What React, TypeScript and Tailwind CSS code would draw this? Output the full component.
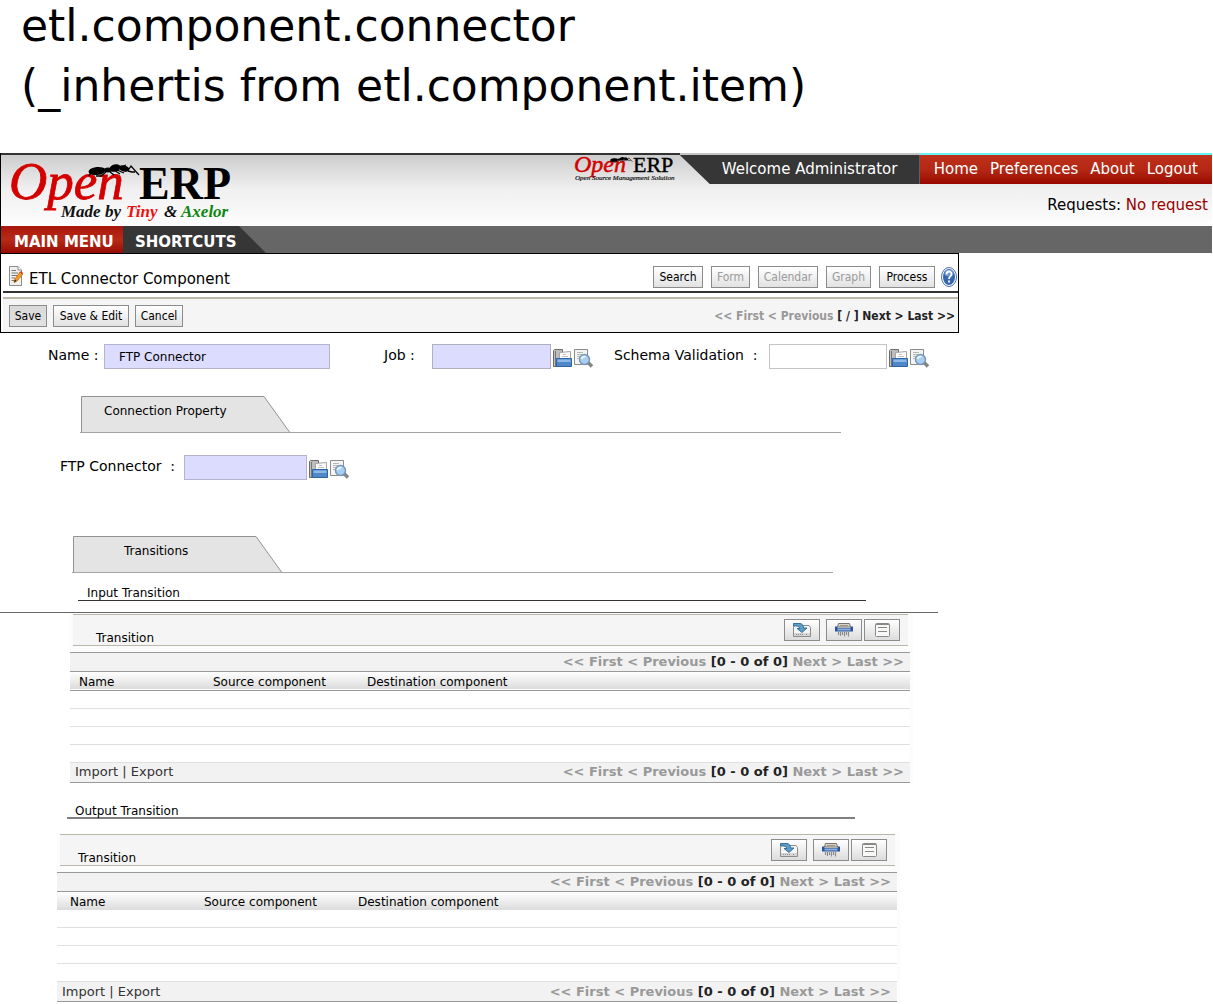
import { useId, type ReactNode } from "react";

function Ant() {
  return (
    <g>
      <ellipse cx="9" cy="7" rx="8.500" ry="4" transform="rotate(-6 9 7)" />
      <ellipse cx="20" cy="6" rx="4" ry="2.500" />
      <ellipse cx="27" cy="4" rx="5.500" ry="3.500" transform="rotate(-15 27 4)" />
      <ellipse cx="36" cy="4.500" rx="5.500" ry="3" transform="rotate(12 36 4.500)" />
      <path
        d="M3 8L1 12M12 9L6 11M18 8L13 12H8M22 8L26 11M26 6L32 10M29 6L36 9M33 3L38 1M41 5L43 2L51 11M40 7L44 8L47 8"
        fill="none"
        stroke="#000"
        strokeWidth="1.300"
      />
    </g>
  );
}

function MainLogo() {
  return (
    <svg className="block h-[66px] w-[236px] shrink-0" viewBox="0 0 236 66" role="img" aria-label="Open ERP, made by Tiny and Axelor">
      <g fontFamily="'Liberation Serif', serif">
        <text x="8" y="40" fontSize="53" fontStyle="italic" fill="#d40000" stroke="#d40000" strokeWidth="0.8">Open</text>
        <text x="138" y="40" fontSize="46" fontWeight="bold" fill="#000">ERP</text>
        <g fontSize="17" fontStyle="italic" fontWeight="bold">
          <text x="60" y="58" fill="#111">Made by</text>
          <text x="125" y="58" fill="#f01010">Tiny</text>
          <text x="163" y="58" fill="#111">&amp;</text>
          <text x="180" y="58" fill="#0d860d">Axelor</text>
        </g>
      </g>
      <g transform="translate(87 5)"><Ant /></g>
    </svg>
  );
}

function SmallLogo() {
  return (
    <svg className="block h-[29px] w-[106px] shrink-0" viewBox="0 0 106 29" role="img" aria-label="Open ERP, Open Source Management Solution">
      <g fontFamily="'Liberation Serif', serif">
        <text x="0" y="17" fontSize="24" fontStyle="italic" fill="#d40000" stroke="#d40000" strokeWidth="0.5">Open</text>
        <text x="59" y="17" fontSize="22" fill="#000" stroke="#000" strokeWidth="0.4">ERP</text>
        <text x="1" y="25" fontSize="7" fontStyle="italic" fill="#111" stroke="#111" strokeWidth="0.2">Open Source Management Solution</text>
      </g>
      <g transform="translate(36 2) scale(.44)"><Ant /></g>
    </svg>
  );
}

function EditIcon() {
  return (
    <svg className="block h-[20px] w-[14px] shrink-0" viewBox="0 0 14 20" aria-hidden="true">
      <path d="M.5 .5H9L12.500 4V19.500H.5Z" fill="#f0f0f0" stroke="#8c8c8c" />
      <path d="M9 .5V4H12.500" fill="#fff" stroke="#8c8c8c" />
      <path d="M2.500 4.500H7M2.500 7H9M2.500 9.500H8M2.500 12H6M2.500 14.500H5" stroke="#777" />
      <path d="M6 13L11 6L13.500 8.500L8 15L5 16.500Z" fill="#f59a1c" stroke="#b85c00" strokeWidth=".7" />
      <path d="M5 16.500L6 13.500L7.500 15Z" fill="#332200" />
      <path d="M11 6L12 5L14 7L13.500 8.500Z" fill="#d43a1a" />
    </svg>
  );
}

function HelpIcon() {
  return (
    <svg className="block h-[20px] w-[16px]" viewBox="0 0 16 20" aria-hidden="true">
      <ellipse cx="8" cy="10" rx="7.500" ry="9.500" fill="#fff" stroke="#4a6fa8" />
      <ellipse cx="8" cy="10" rx="6" ry="8" fill="#3765ac" />
      <ellipse cx="8" cy="6" rx="4.500" ry="3.500" fill="#6f95cf" />
      <path d="M5.500 7.500C5.500 3.500 10.800 3.500 10.500 7.500C10.300 9.500 8 9.500 8 12M8 13.500V15.500" fill="none" stroke="#fff" strokeWidth="1.800" />
    </svg>
  );
}

function FolderIcon() {
  return (
    <svg className="block h-[19px] w-[19px]" viewBox="0 0 19 19" aria-hidden="true">
      <path d="M.5 17.500V1.500L1.500 .5H9.500V17.500Z" fill="#bdbdbd" stroke="#6c6c6c" />
      <path d="M2.500 2V17" stroke="#777" />
      <path d="M6.500 3.500L17.500 2.500V11H6.500Z" fill="#fafafa" stroke="#a5a5a5" />
      <path d="M10 5.500H13M9 7.500H15" stroke="#c4c4c4" />
      <path d="M3.500 9.500H18.500V17.500H3.500Z" fill="#4f87c7" stroke="#2c64a8" />
      <path d="M4.500 10.500H17.500V13H4.500Z" fill="#8fb8e4" />
    </svg>
  );
}

function LookupIcon() {
  return (
    <svg className="block h-[19px] w-[20px]" viewBox="0 0 20 19" aria-hidden="true">
      <path d="M.5 .5H13.500V15.500H.5Z" fill="#f4f4f4" stroke="#8b8b8b" />
      <path d="M3 3.500H9M3 5.500H8M3 7.500H6M3 9.500H5" stroke="#b5b5b5" />
      <path d="M14 13.500L18 17.500" stroke="#858585" strokeWidth="3.500" />
      <circle cx="10.500" cy="10.500" r="5" fill="#a9cdf0" stroke="#7494b8" strokeWidth="1.400" />
      <path d="M7.500 10C8 8 9.800 7.300 11.500 7.800" fill="none" stroke="#e6f3ff" strokeWidth="2" />
    </svg>
  );
}

function SaveDiskIcon() {
  return (
    <svg className="block h-[14px] w-[18px]" viewBox="0 0 18 14" aria-hidden="true">
      <path d="M.5 3.500L2 2.500H16L17.500 4.500V13.500H.5Z" fill="#f5f5f5" stroke="#8b8b8b" />
      <path d="M1 10H17V13H1Z" fill="#d5d5d5" />
      <path d="M3 11.500H11M13 11.500H15" stroke="#8e8e8e" strokeDasharray="1 1" />
      <path d="M.5 .5H7C9.500 .8 10.500 2.500 10.500 5H14L9 9.500L4 5.500H7C6.500 3.500 4 2.500 .5 3Z" fill="#5f9cc6" stroke="#2b6690" strokeWidth=".9" />
    </svg>
  );
}

function ShredIcon() {
  return (
    <svg className="block h-[14px] w-[18px]" viewBox="0 0 18 14" aria-hidden="true">
      <path d="M3.500 .5H14.500L15.500 4H2.500Z" fill="#d8d4cc" stroke="#77736a" />
      <path d="M5 2.500H13" stroke="#9d998f" />
      <path d="M0 3.500H2.500V5H15.500V3.500H18V8.500H0Z" fill="#28549b" />
      <path d="M2.500 5.500H15.500V7.500H2.500Z" fill="#8fb0de" />
      <path d="M3.500 9V12M5.500 9V13M7.500 9V12M9.500 9V13.500M11.500 9V12M13.500 9V13.500" stroke="#8b8b8b" strokeWidth="1.200" />
    </svg>
  );
}

function FormIcon() {
  return (
    <svg className="block h-[14px] w-[15px]" viewBox="0 0 15 14" aria-hidden="true">
      <rect x=".5" y=".5" width="14" height="13" rx="1" fill="#f8f8f8" stroke="#8a8a84" />
      <path d="M1 1.500H14" stroke="#8a8a84" />
      <path d="M3 4.500H12M3 8.500H12" stroke="#8a8a84" />
    </svg>
  );
}

function ToolButton({ children, disabled, className }: { children: ReactNode; disabled?: boolean; className: string }) {
  return (
    <button
      type="button"
      disabled={disabled}
      className={`h-[22px] shrink-0 whitespace-nowrap border border-[#8c8c8c] bg-linear-to-b font-['DejaVu_Sans_Condensed','DejaVu_Sans',sans-serif] text-[12px] leading-[20px] text-black disabled:text-[#9b9b9b] ${className}`}
    >
      {children}
    </button>
  );
}

function IconButton({ label, children }: { label: string; children: ReactNode }) {
  return (
    <button
      type="button"
      aria-label={label}
      className="flex h-[22px] w-[36px] items-center justify-center border border-[#8c8c8c] bg-linear-to-b from-white to-[#dcdcdc]"
    >
      {children}
    </button>
  );
}

function LookupButtons({ label }: { label: string }) {
  return (
    <span className="ml-[2px] flex gap-[2px] pt-[3px]">
      <button type="button" aria-label={`Open ${label}`}><FolderIcon /></button>
      <button type="button" aria-label={`Search ${label}`}><LookupIcon /></button>
    </span>
  );
}

function Field({ label, labelClass, inputClass, value, lookup }: { label: string; labelClass: string; inputClass: string; value?: string; lookup?: boolean }) {
  const id = useId();
  return (
    <div className="flex items-center">
      <label htmlFor={id} className={`shrink-0 whitespace-pre pb-[3px] text-[14px] leading-[20px] ${labelClass}`}>{label}</label>
      <input id={id} type="text" defaultValue={value} className={`h-[25px] min-w-0 border text-[12px] ${inputClass}`} />
      {lookup && <LookupButtons label={label.replace(/\s*:$/, "")} />}
    </div>
  );
}

function TabHeader({ title, titleClass }: { title: string; titleClass: string }) {
  return (
    <div className="w-full max-w-[761px] border-b border-[#a5a5a5]">
      <h2 className="relative h-[36px] w-[210px]">
        <svg className="absolute inset-0 h-full w-full" viewBox="0 0 210 36" aria-hidden="true">
          <path d="M1.500 36V.5H184L209.500 36" fill="#e4e4e4" stroke="#929292" />
        </svg>
        <span className={`relative block pt-[7px] text-[12px] leading-[16px] ${titleClass}`}>{title}</span>
      </h2>
    </div>
  );
}

function Pager() {
  return (
    <nav aria-label="Pages" className="whitespace-nowrap text-[13px] leading-[18px] font-bold text-[#999]">
      <a href="#first">&lt;&lt; First</a> <a href="#previous">&lt; Previous</a>{" "}
      <span className="text-[#222]">[0 - 0 of 0]</span>{" "}
      <a href="#next">Next &gt;</a> <a href="#last">Last &gt;&gt;</a>
    </nav>
  );
}

function TransitionList({ label, titleClass, firstCell, headLine }: { label: string; titleClass: string; firstCell: string; headLine: string }) {
  return (
    <section aria-label={label} className="w-full max-w-[843px] bg-[#fcfcfc] pt-px pr-[3px]">
      <div className="mr-[2px] ml-[3px] flex h-[32px] items-end justify-between border-y border-[#bab6a9] bg-[#f5f5f5] pr-[8px]">
        <h4 className={`text-[12px] leading-[14px] ${titleClass}`}>Transition</h4>
        <div className="flex self-start pt-[4px]">
          <IconButton label="Save transition"><SaveDiskIcon /></IconButton>
          <span className="ml-[6px] flex gap-[2px]">
            <IconButton label="Delete transition"><ShredIcon /></IconButton>
            <IconButton label="Open form"><FormIcon /></IconButton>
          </span>
        </div>
      </div>
      <div className="mt-[6px] flex h-[20px] items-center justify-end border-y border-[#999] bg-[#f2f2f2] pr-[6px]">
        <Pager />
      </div>
      <table className="w-full table-fixed border-collapse bg-white text-left text-[12px]">
        <thead>
          <tr className={`h-[18px] bg-linear-to-b from-white to-[#dcdcdc] align-bottom ${headLine}`}>
            <th className={`p-0 align-bottom leading-[15px] font-normal ${firstCell}`}>Name</th>
            <th className="w-[154px] p-0 align-bottom leading-[15px] font-normal">Source component</th>
            <th className="p-0 align-bottom leading-[15px] font-normal">Destination component</th>
          </tr>
        </thead>
        <tbody>
          {[1, 2, 3, 4].map((row) => (
            <tr key={row} className="h-[18px] border-b border-[#e0e0e0]">
              <td className="p-0" />
              <td className="p-0" />
              <td className="p-0" />
            </tr>
          ))}
        </tbody>
      </table>
      <div className="flex h-[20px] items-center justify-between border-b border-[#999] bg-[#f2f2f2] pr-[6px] pl-[5px] text-[13px] leading-[18px] text-[#333]">
        <span><a href="#import">Import</a> | <a href="#export">Export</a></span>
        <Pager />
      </div>
    </section>
  );
}

export default function App() {
  return (
    <div className="overflow-hidden bg-white font-['DejaVu_Sans',sans-serif] text-black">
      <h1 className="-mt-1 h-[157px] pl-[21px] text-[44px] leading-[60px]">
        etl.component.connector
        <br />
        (_inhertis from etl.component.item)
      </h1>

      <header className="mr-px">
        <div className="flex h-[73px] justify-between border-l border-black bg-linear-to-b from-[#cbcbcb] via-[#f0f0f0] to-[#fdfdfd]">
          <div className="grow border-t-2 border-[#333] pt-[4px]"><MainLogo /></div>
          <div className="flex flex-col">
            <div className="flex">
              <div className="border-t-2 border-[#333]"><SmallLogo /></div>
              <div className="border-t-2 border-[#c4c4c4]">
                <p className="h-[29px] w-[240px] bg-[#363636] pl-[42px] text-[15px] leading-[28px] text-white [clip-path:polygon(0_0,100%_0,100%_100%,30px_100%)]">Welcome Administrator</p>
              </div>
              <nav aria-label="Account" className="flex h-[31px] gap-[12px] border-t-2 border-[#66f4f6] bg-linear-to-b from-[#bd301b] via-[#b52814] to-[#990500] px-[14px] text-[15px] leading-[28px] text-white">
                <a href="#home">Home</a>
                <a href="#preferences">Preferences</a>
                <a href="#about">About</a>
                <a href="#logout">Logout</a>
              </nav>
            </div>
            <p className="pt-[11px] pr-[4px] text-right text-[15px] leading-[20px]">
              Requests: <a href="#requests" className="text-[#990000]">No request</a>
            </p>
          </div>
        </div>
        <nav aria-label="Main" className="flex h-[27px] border-l border-black bg-[#666] text-[15px] leading-[32px] font-bold text-white">
          <a href="#menu" className="w-[122px] bg-linear-to-b from-[#a8160a] via-[#b82a18] to-[#990a03] pl-[13px]">MAIN MENU</a>
          <a href="#shortcuts" className="w-[143px] bg-[#363636] pl-[12px] [clip-path:polygon(0_0,116px_0,100%_100%,0_100%)]">SHORTCUTS</a>
        </nav>
      </header>

      <main>
        <div className="w-full max-w-[959px] border border-black pl-[2px]">
          <div className="flex h-[39px] items-center justify-between border-b-2 border-[#333] pr-[1px] pl-[6px]">
            <h2 className="flex items-center gap-[6px] pt-[7px] text-[15px] leading-[20px]">
              <EditIcon />
              <span className="pt-[5px]">ETL Connector Component</span>
            </h2>
            <div className="flex items-center gap-[8px] pt-[9px]">
              <ToolButton className="w-[50px] from-white to-[#e2e2e2]">Search</ToolButton>
              <ToolButton className="w-[39px] from-white to-[#e2e2e2]" disabled>Form</ToolButton>
              <ToolButton className="w-[60px] from-white to-[#e2e2e2]" disabled>Calendar</ToolButton>
              <ToolButton className="w-[45px] from-white to-[#e2e2e2]" disabled>Graph</ToolButton>
              <span className="flex items-center gap-[6px]">
                <ToolButton className="w-[56px] from-white to-[#e2e2e2]">Process</ToolButton>
                <button type="button" aria-label="Help"><HelpIcon /></button>
              </span>
            </div>
          </div>
          <div className="mt-[4px] flex h-[35px] items-center justify-between border-t-2 border-[#bbb8a8] bg-[#f5f5f5] pr-[3px] pl-[6px]">
            <div className="flex gap-[6px]">
              <ToolButton className="w-[38px] from-[#d9d9d9] to-[#e2e2e2]">Save</ToolButton>
              <ToolButton className="w-[76px] from-white to-[#e2e2e2]">Save &amp; Edit</ToolButton>
              <ToolButton className="w-[48px] from-white to-[#e2e2e2]">Cancel</ToolButton>
            </div>
            <nav aria-label="Records" className="font-['DejaVu_Sans_Condensed','DejaVu_Sans',sans-serif] text-[12px] leading-[20px] font-bold text-[#222]">
              <a href="#first" className="text-[#999]">&lt;&lt; First</a> <a href="#previous" className="text-[#999]">&lt; Previous</a> [ / ] <a href="#next">Next &gt;</a> <a href="#last">Last &gt;&gt;</a>
            </nav>
          </div>
        </div>

        <form>
          <div className="flex w-full max-w-[930px] pt-[11px] pl-[48px]">
            <Field label="Name :" labelClass="w-[56px]" inputClass="w-[226px] border-[#b6b3cc] bg-[#dcdcff] pl-[14px]" value="FTP Connector" />
            <div className="ml-[54px]">
              <Field label="Job :" labelClass="w-[48px]" inputClass="w-[119px] border-[#b0b0c0] bg-[#dcdcff]" lookup />
            </div>
            <div className="ml-[20px]">
              <Field label="Schema Validation  :" labelClass="w-[155px]" inputClass="w-[118px] border-[#c4c4c4] bg-white" lookup />
            </div>
          </div>

          <div className="pt-[27px] pl-[80px]">
            <TabHeader title="Connection Property" titleClass="pl-[24px]" />
          </div>
          <div className="pt-[22px] pl-[60px]">
            <Field label="FTP Connector  :" labelClass="w-[124px]" inputClass="w-[123px] border-[#b6b3cc] bg-[#dcdcff]" lookup />
          </div>

          <div className="pt-[56px] pl-[72px]">
            <TabHeader title="Transitions" titleClass="pl-[52px]" />
          </div>

          <div className="pt-[14px] pl-[78px]">
            <h3 className="w-full max-w-[788px] border-b border-[#333] pl-[9px] text-[12px] leading-[13px]">Input Transition</h3>
          </div>
          <hr className="mt-[11px] w-full max-w-[938px] border-[#666]" />
          <div className="pl-[70px]">
            <TransitionList label="Input transitions" titleClass="pl-[23px]" firstCell="w-[143px] pl-[9px]" headLine="border-b border-[#999]" />
          </div>

          <div className="pt-[23px] pl-[67px]">
            <h3 className="w-full max-w-[788px] border-b-2 border-[#808080] pl-[8px] text-[12px] leading-[11px]">Output Transition</h3>
          </div>
          <div className="pt-[14px] pl-[57px]">
            <TransitionList label="Output transitions" titleClass="pl-[18px]" firstCell="w-[147px] pl-[13px]" headLine="" />
          </div>
        </form>
      </main>
    </div>
  );
}
